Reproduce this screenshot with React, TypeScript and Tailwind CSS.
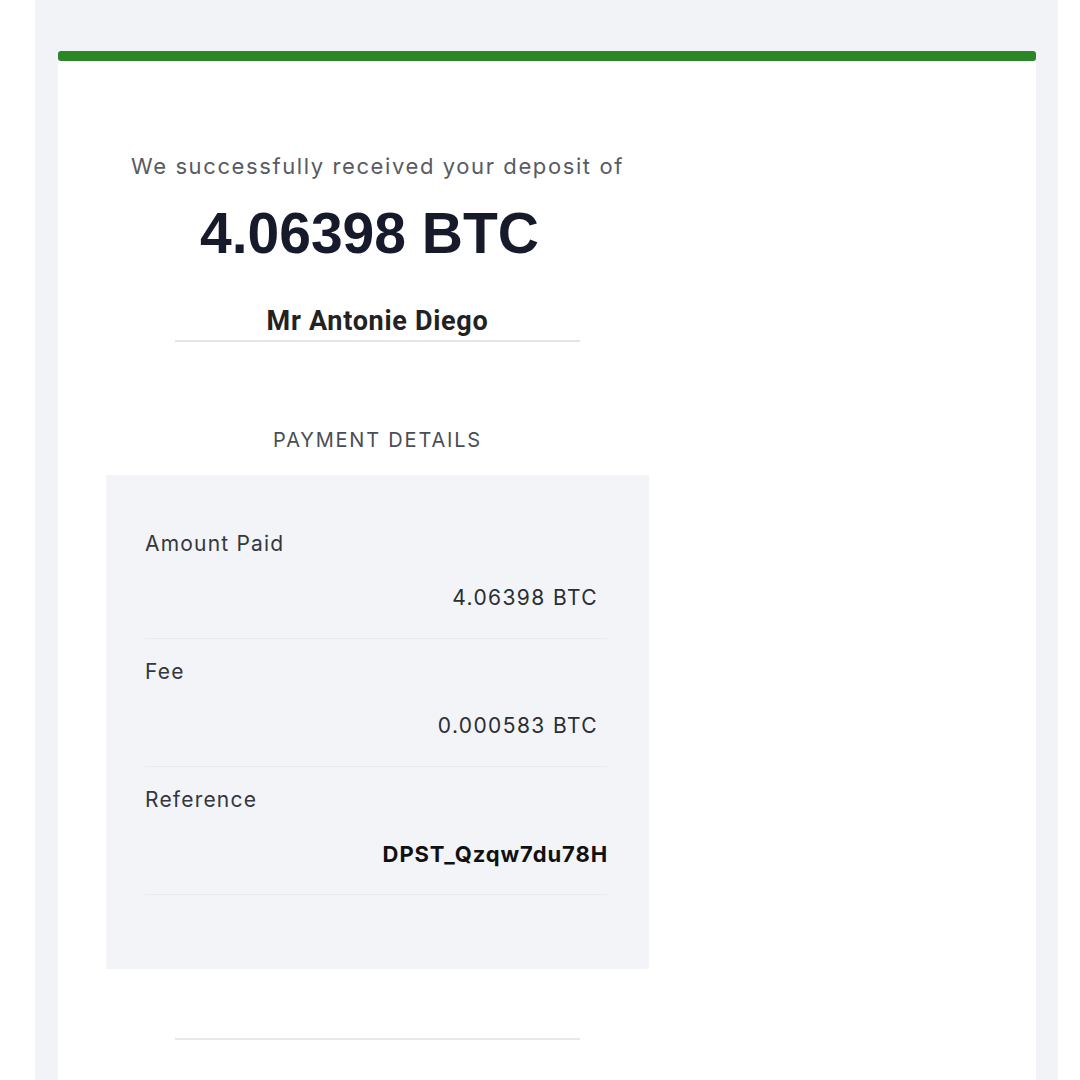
import React from "react";

const rows = [
  { label: "Amount Paid", value: "4.06398 BTC", strong: false },
  { label: "Fee", value: "0.000583 BTC", strong: false },
  { label: "Reference", value: "DPST_Qzqw7du78H", strong: true },
];

const App = () => {
  return (
    <div className="w-[1080px] h-[1080px] overflow-hidden bg-white pl-[35px] pr-[22px] font-['Inter',sans-serif]">
      <div className="h-full bg-[#f1f3f6] pt-[51px] pl-[23px] pr-[22px] flex flex-col">
        {/* green status bar */}
        <div className="h-[10px] rounded-[3px] bg-[#2a8626]" />

        <div className="flex-1 bg-white pl-[48px]">
          <div className="w-[543px] flex flex-col items-center">
            <p className="mt-[91px] text-[22px] leading-[28px] tracking-[1.6px] text-[#585b61]">
              We successfully received your deposit of
            </p>
            <p className="mt-[21px] mr-[16px] text-[57px] leading-[64px] font-bold text-[#171a2b] font-['Liberation_Sans',sans-serif]">
              4.06398 BTC
            </p>
            <p className="mt-[41px] text-[27px] leading-[30px] font-bold text-[#222] font-['Roboto',sans-serif] tracking-[0.7px]">
              Mr Antonie Diego
            </p>
            <div className="mt-[4px] w-[405px] h-[2px] bg-[#e3e5e8]" />

            <p className="mt-[86px] text-[20px] leading-[24px] tracking-[1.8px] text-[#4a4e55]">
              PAYMENT DETAILS
            </p>

            {/* details box */}
            <div className="mt-[23px] w-full bg-[#f2f4f7] pt-[36px] pb-[74px] pl-[39px] pr-[42px]">
              {rows.map((r) => (
                <div
                  key={r.label}
                  className="pt-[21px] pb-[28px] border-b border-[#e8ebee]"
                >
                  <p className="text-[21px] leading-[24px] tracking-[1.2px] text-[#34373d]">
                    {r.label}
                  </p>
                  <p
                    className={
                      r.strong
                        ? "mt-[30px] text-right text-[22px] leading-[24px] font-bold tracking-[0.9px] text-[#111] -mr-[1px]"
                        : "mt-[30px] text-right text-[21px] leading-[24px] tracking-[1.4px] text-[#2b2e33] pr-[9px]"
                    }
                  >
                    {r.value}
                  </p>
                </div>
              ))}
            </div>

            <div className="mt-[69px] w-[405px] h-[2px] bg-[#e6e8eb]" />
          </div>
        </div>
      </div>
    </div>
  );
};

export default App;
